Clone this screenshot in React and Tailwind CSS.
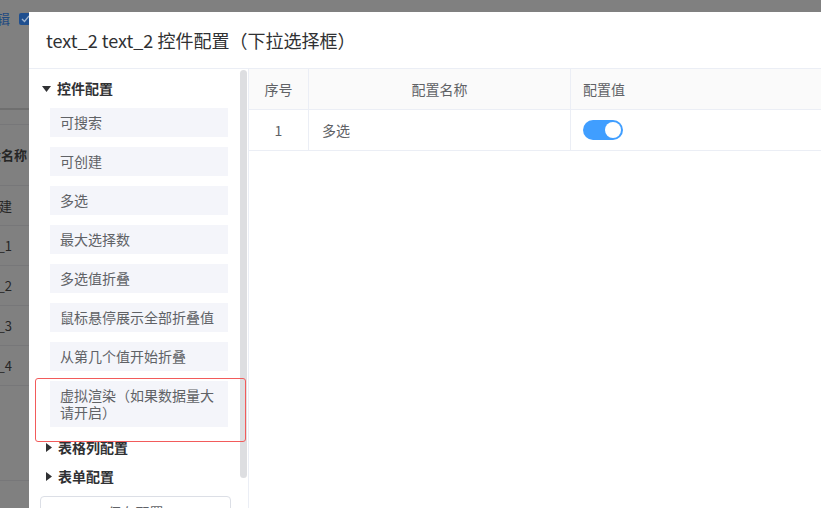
import React from 'react';

const font = { fontFamily: '"Noto Sans CJK SC", "Noto Sans", sans-serif' };

const items = [
  '可搜索',
  '可创建',
  '多选',
  '最大选择数',
  '多选值折叠',
  '鼠标悬停展示全部折叠值',
  '从第几个值开始折叠',
  '虚拟渲染（如果数据量大请开启）',
];

const CaretDown = () => (
  <svg width="9" height="6" viewBox="0 0 9 6" className="shrink-0">
    <path d="M0 0 H9 L4.5 6 Z" fill="#303133" />
  </svg>
);

const CaretRight = () => (
  <svg width="6" height="9" viewBox="0 0 6 9" className="shrink-0">
    <path d="M0 0 V9 L6 4.5 Z" fill="#303133" />
  </svg>
);

// dimmed page behind the dialog
const BackPage = () => (
  <div className="w-[29px] h-full overflow-hidden flex flex-col text-[13px] text-[#262626]">
    <div className="h-[12px]" />
    <div className="flex justify-end items-center h-[13px] gap-[9px] whitespace-nowrap">
      <span className="text-[#1f4a80] leading-[13px] text-[14px]">编辑</span>
      <span className="w-[12px] h-[12px] rounded-[2px] bg-[#1f4f8f] flex items-center justify-center shrink-0 -mr-[2px]">
        <svg width="9" height="8" viewBox="0 0 9 8">
          <path d="M1 4 L3.5 6.5 L8 1" stroke="#9fb3cc" strokeWidth="1.4" fill="none" />
        </svg>
      </span>
    </div>
    <div className="h-[83px]" />
    <div className="h-[2px] bg-[#6f6f6f]" />
    <div className="h-[14px]" />
    <div className="h-px bg-[#777779]" />
    <div className="h-[60px] flex items-center justify-end whitespace-nowrap font-bold pr-[2px]">字段名称</div>
    {['创建', 'text_1', 'text_2', 'text_3', 'text_4'].map((t) => (
      <div key={t} className="h-[40px] border-t border-[#777779] flex items-center justify-end whitespace-nowrap pr-[17px]">
        {t}
      </div>
    ))}
    <div className="border-t border-[#777779]" />
    <div className="h-[94px]" />
    <div className="border-t border-[#777779]" />
  </div>
);

export default function App() {
  return (
    <div className="relative w-[821px] h-[508px] overflow-hidden bg-[#808080]" style={font}>
      <BackPage />

      {/* dialog */}
      <div className="absolute left-[29px] top-[12px] w-[830px] h-[520px] bg-white flex flex-col">
        <div className="h-[57px] shrink-0 border-b border-[#ebeef5] flex items-center pl-[17px]">
          <span className="text-[18px] text-[#303133] whitespace-nowrap">text_2 text_2 控件配置（下拉选择框）</span>
        </div>

        <div className="flex flex-1 min-h-0">
          {/* left tree */}
          <div className="w-[220px] shrink-0 flex border-r border-[#ebeef5]">
            <div className="flex-1 flex flex-col text-[14px]">
              <div className="mt-[5px] h-[29px] flex items-center pl-[13px] gap-[6px]">
                <CaretDown />
                <span className="font-bold text-[#303133]">控件配置</span>
              </div>
              <div className="mt-[5px] flex flex-col gap-[10px] pl-[21px]">
                {items.map((t) => (
                  <div
                    key={t}
                    className="w-[178px] bg-[#f4f5fa] py-[6px] pl-[10px] pr-[10px] leading-[17px] text-[#606266]"
                  >
                    {t}
                  </div>
                ))}
              </div>
              <div className="mt-[6px] h-[29px] flex items-center pl-[17px] gap-[6px]">
                <CaretRight />
                <span className="font-bold text-[#303133]">表格列配置</span>
              </div>
              <div className="h-[29px] flex items-center pl-[17px] gap-[6px]">
                <CaretRight />
                <span className="font-bold text-[#303133]">表单配置</span>
              </div>
              <div className="mt-[5px] ml-[11px] w-[191px] h-[32px] border border-[#dcdfe6] rounded-[4px] flex items-center justify-center text-[#606266]">
                保存配置
              </div>
            </div>
            <div className="w-[7px] mr-[1px] pt-[1px]">
              <div className="h-[408px] rounded-full bg-[#dddee1]" />
            </div>
          </div>

          {/* right table */}
          <div className="flex-1 text-[14px] text-[#606266]">
            <div className="flex h-[41px] bg-[#fafafa] border-b border-[#ebeef5]">
              <div className="w-[60px] border-r border-[#ebeef5] flex items-center justify-center">序号</div>
              <div className="w-[262px] border-r border-[#ebeef5] flex items-center justify-center">配置名称</div>
              <div className="flex-1 flex items-center pl-[12px]">配置值</div>
            </div>
            <div className="flex h-[41px] border-b border-[#ebeef5]">
              <div className="w-[60px] border-r border-[#ebeef5] flex items-center justify-center">1</div>
              <div className="w-[262px] border-r border-[#ebeef5] flex items-center pl-[13px]">多选</div>
              <div className="flex-1 flex items-center pl-[12px]">
                <div className="w-[40px] h-[20px] rounded-full bg-[#409eff] flex items-center justify-end pr-[2px]">
                  <div className="w-[16px] h-[16px] rounded-full bg-white" />
                </div>
              </div>
            </div>
          </div>
        </div>
      </div>

      {/* annotation highlight */}
      <div className="absolute left-[35px] top-[378px] w-[211px] h-[64px] border-[1.5px] border-[#f25b5b] rounded-[3px]" />
    </div>
  );
}
